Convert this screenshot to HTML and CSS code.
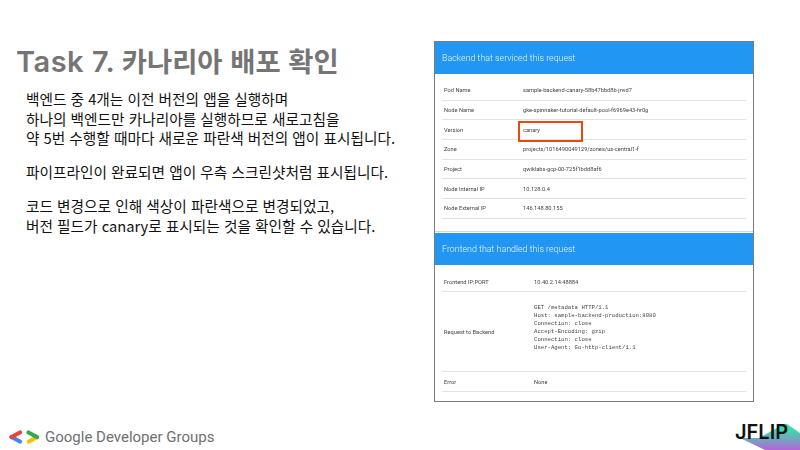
FILE: index.html
```html
<!DOCTYPE html>
<html lang="ko">
<head>
<meta charset="utf-8">
<title>Task 7</title>
<link rel="stylesheet" href="styles.css">
</head>
<body>
<div class="slide">
  <div class="left">
    <h1 class="title"><span class="title-latin">Task 7.</span><span class="title-ko">카나리아 배포 확인</span></h1>
    <div class="body">
      <p>백엔드 중 4개는 이전 버전의 앱을 실행하며<br>하나의 백엔드만 카나리아를 실행하므로 새로고침을<br>약 5번 수행할 때마다 새로운 파란색 버전의 앱이 표시됩니다.</p>
      <p>파이프라인이 완료되면 앱이 우측 스크린샷처럼 표시됩니다.</p>
      <p>코드 변경으로 인해 색상이 파란색으로 변경되었고,<br>버전 필드가 canary로 표시되는 것을 확인할 수 있습니다.</p>
    </div>
    <div class="brand">
      <svg class="gdg" width="32" height="16" viewBox="0 0 32 16">
        <path d="M3.5 8 L12 12.5" stroke="#4285f4" stroke-width="4.2" stroke-linecap="round" fill="none"/>
        <path d="M12 3.5 L3.5 8" stroke="#ea4335" stroke-width="4.2" stroke-linecap="round" fill="none"/>
        <path d="M29 8 L21 12.5" stroke="#fbbc04" stroke-width="4.2" stroke-linecap="round" fill="none"/>
        <path d="M20.5 3.5 L29 8" stroke="#34a853" stroke-width="4.2" stroke-linecap="round" fill="none"/>
      </svg>
      <span class="brand-name">Google Developer Groups</span>
    </div>
  </div>
  <div class="panel">
    <div class="panel-head">Backend that serviced this request</div>
    <div class="rows backend">
      <div class="row"><span class="k">Pod Name</span><span class="v">sample-backend-canary-58b47bbd8b-jnvd7</span></div>
      <div class="row"><span class="k">Node Name</span><span class="v">gke-spinnaker-tutorial-default-pool-f6969e43-hr0g</span></div>
      <div class="row"><span class="k">Version</span><span class="v">canary</span><span class="mark"></span></div>
      <div class="row"><span class="k">Zone</span><span class="v">projects/1016490049129/zones/us-central1-f</span></div>
      <div class="row"><span class="k">Project</span><span class="v">qwiklabs-gcp-00-725f1bdd8af6</span></div>
      <div class="row"><span class="k">Node Internal IP</span><span class="v">10.128.0.4</span></div>
      <div class="row"><span class="k">Node External IP</span><span class="v">146.148.80.155</span></div>
    </div>
    <div class="panel-head front">Frontend that handled this request</div>
    <div class="rows frontend">
      <div class="row"><span class="k">Frontend IP:PORT</span><span class="v">10.40.2.14:48884</span></div>
      <div class="row tall"><span class="k">Request to Backend</span><pre class="v code">GET /metadata HTTP/1.1
Host: sample-backend-production:8080
Connection: close
Accept-Encoding: gzip
Connection: close
User-Agent: Go-http-client/1.1</pre></div>
      <div class="row"><span class="k">Error</span><span class="v">None</span></div>
    </div>
  </div>
  <div class="jflip">
    <svg class="jflip-bg" width="66" height="26" viewBox="0 0 66 26">
      <defs>
        <linearGradient id="jf" x1="0" y1="0" x2="0" y2="1">
          <stop offset="0.25" stop-color="#3fd8ae"/>
          <stop offset="1" stop-color="#b565d8"/>
        </linearGradient>
      </defs>
      <path d="M6 14 L25 14 L50 0 L53 0 L66 9 V26 H31 Z" fill="url(#jf)"/>
    </svg>
    <span class="jflip-text">JFLIP</span>
  </div>
</div>
</body>
</html>
```

FILE: styles.css
```css
* { box-sizing: border-box; }
html, body { margin: 0; padding: 0; }
body { width: 800px; height: 450px; overflow: hidden; background: #fff; }
.slide {
  position: relative;
  width: 800px;
  height: 450px;
  display: flex;
  font-family: "Noto Sans CJK KR", "Noto Sans", sans-serif;
}
.left {
  width: 434px;
  height: 450px;
  display: flex;
  flex-direction: column;
}
.title {
  margin: 40px 0 0 16px;
  display: flex;
  align-items: baseline;
  gap: 6.5px;
  font-size: 29px;
  line-height: 40px;
  font-weight: 700;
  color: #757575;
  white-space: nowrap;
}
.title-latin {
  font-family: "Inter", sans-serif;
  font-weight: 600;
  letter-spacing: 0.5px;
}
.title-ko { font-size: 27.4px; }
.body {
  margin: 7px 0 0 26px;
  font-size: 14.68px;
  line-height: 19.6px;
  color: #111;
  white-space: nowrap;
}
.body p { margin: 0 0 14.5px; }
.brand {
  margin: auto 0 0 8px;
  height: 16px;
  position: relative;
  top: -5px;
  display: flex;
  align-items: center;
  gap: 5px;
}
.gdg { display: block; flex: none; }
.brand-name {
  font-family: "Roboto", sans-serif;
  font-size: 15px;
  color: #6d6f73;
  white-space: nowrap;
}
.panel {
  margin-top: 41px;
  width: 320px;
  height: 361px;
  border: 1px solid #7a7a7a;
  background: #fff;
  font-family: "Roboto", sans-serif;
  color: #444;
  filter: blur(0.3px);
}
.panel-head {
  height: 32px;
  padding-left: 7px;
  background: #2196f3;
  color: #eaf5fe;
  font-size: 8.9px;
  font-weight: 300;
  line-height: 32px;
}
.panel-head.front { height: 33px; border-top: 1px solid #fff; }
.rows { padding: 7px 7px 0; }
.backend { height: 158px; box-shadow: inset 0 -1px 0 #d5d5d5; }
.row {
  position: relative;
  height: 19.7px;
  display: flex;
  align-items: center;
  border-bottom: 1px solid #e3e3e3;
  font-size: 5.7px;
}
.k { width: 81px; padding-left: 2px; flex: none; }
.v { white-space: nowrap; }
.frontend .k { width: 92px; }
.frontend .row { height: 20px; }
.frontend .row.tall { height: 80px; }
.code {
  margin: 0 0 7px;
  font-family: "Liberation Mono", monospace;
  font-size: 5.65px;
  line-height: 8px;
  white-space: pre;
}
.mark {
  position: absolute;
  left: 76px;
  top: 0.5px;
  width: 65px;
  height: 21.5px;
  border: 2px solid #e8490f;
}
.jflip { position: absolute; right: 0; bottom: 0; width: 66px; height: 26px; }
.jflip-bg { display: block; }
.jflip-text {
  position: absolute;
  left: 1px;
  top: -4px;
  font-family: "Inter", sans-serif;
  font-size: 20px;
  line-height: 24px;
  font-weight: 600;
  color: #111;
}
```
